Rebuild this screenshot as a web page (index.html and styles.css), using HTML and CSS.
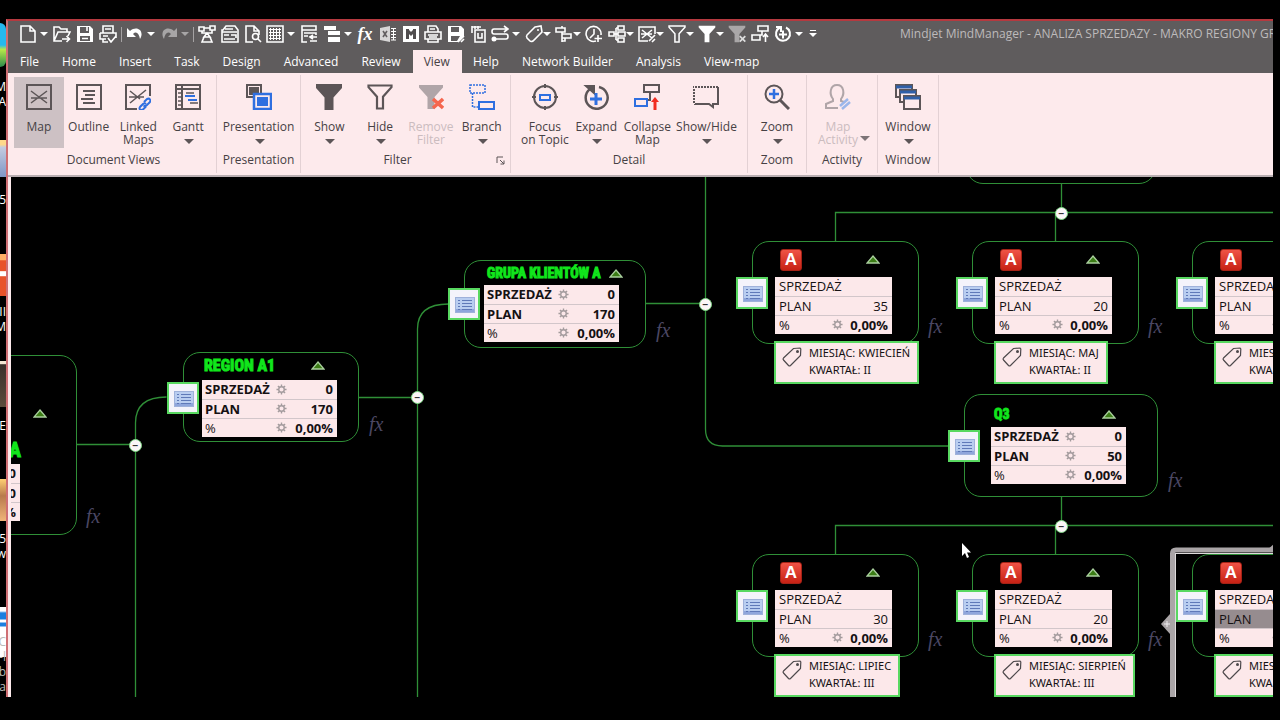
FILE: index.html
```html
<!DOCTYPE html>
<html lang="en">
<head>
<meta charset="utf-8">
<title>Mindjet MindManager</title>
<link rel="stylesheet" href="styles.css">
</head>
<body>
<svg class="defs" aria-hidden="true">
  <symbol id="list" viewBox="0 0 20 16"><rect x=".5" y=".5" width="19" height="15" fill="#b9cdf0" stroke="#9fb1da"/><path d="M1 12h18v3H1z" fill="#8fa6dc"/><path d="M3 3.500h2M3 6.500h2M3 9.500h2M3 12.500h2M7 3.500h10M7 6.500h10M7 9.500h10M7 12.500h10" stroke="#5f79b8"/></symbol>
  <symbol id="tri" viewBox="0 0 14 9"><path d="M7 1 13 8H1z" fill="#3c7d16" stroke="#a9cf9d" stroke-width="1.300"/></symbol>
  <symbol id="gear" viewBox="0 0 12 12"><circle cx="6" cy="6" r="3" fill="none" stroke="#a39b9d" stroke-width="1.500"/><path d="M6 .5V3M6 9v2.500M.5 6H3M9 6h2.500M2.100 2.100l1.800 1.800M8.100 8.100l1.800 1.800M9.900 2.100 8.100 3.900M3.900 8.100 2.100 9.900" stroke="#a39b9d" stroke-width="1.500"/></symbol>
  <symbol id="tag" viewBox="0 0 20 20"><path d="M11.500 1.500 18 1l.8 1-.3 6.500L8.500 18.500q-1 .8-2 0L1.500 13q-.8-1 0-2z" fill="none" stroke="#4d484b" stroke-width="1.200"/><circle cx="15.500" cy="4.500" r="1.500" fill="#4d484b"/></symbol>
  <symbol id="funnel" viewBox="0 0 26 26"><path d="M1 1h24v2.500L16.500 13v12h-7V13L1 3.500z"/></symbol>
  <symbol id="hollow" viewBox="0 0 26 26"><path d="M1.500 1.500h23v1.700L16 12.700v11.800h-6V12.700L1.500 3.200z" fill="none" stroke-width="2.200"/></symbol>
</svg>

<aside class="desktop" aria-hidden="true">
  <i class="pic p1"></i><span class="cap c1">M<br>A</span>
  <i class="pic p2"></i><span class="cap c2">5</span>
  <i class="pic p3"></i><span class="cap c3">II<br>M</span>
  <i class="pic p4"></i><span class="cap c4">E</span>
  <i class="pic p5"></i><span class="cap c5">5<br>w</span>
  <i class="pic p6"></i><span class="cap c6">C<br>-l<br>b<br>na</span>
</aside>

<main class="app">
  <header class="titlebar">
    <div class="qat">
      <div class="qgroup">
        <button class="q drop" aria-label="New"><svg viewBox="0 0 18 18"><path d="M2 1h9l5 5v11H2zM11 1v5h5"/></svg></button>
        <button class="q" aria-label="Open"><svg viewBox="0 0 18 18"><path d="M9 16H1V2h5l2 2h6v3M1 16 5 7h12l-2 4M9 14h7M13.500 11l3 3-3 3"/></svg></button>
        <button class="q" aria-label="Save"><svg viewBox="0 0 18 18"><path class="f" d="M1 1h13l3 3v13H1zM4 2v6h9V2zm0 9v5h10v-5z" fill-rule="evenodd"/><path d="M11 2v4M6 13.500h6"/></svg></button>
        <button class="q" aria-label="Print"><svg viewBox="0 0 18 18"><path d="M4 8V1h10v7M1 8h16v5M1 8v6h6M6 4h6M4 11h5M4 14v3h5M9 13l3 4 5-6"/></svg></button>
      </div>
      <span class="qsep"></span>
      <div class="qgroup">
        <button class="q drop" aria-label="Undo"><svg viewBox="0 0 18 18"><path class="f" d="M1 3v9h9L7 9c3-3 6-1 7 5 5-8-3-14-10-8z"/></svg></button>
        <button class="q drop dim" aria-label="Redo"><svg viewBox="0 0 18 18"><path class="f" d="M17 3v9H8l3-3C8 6 5 8 4 14-1 6 7 0 14 6z"/></svg></button>
      </div>
      <span class="qsep"></span>
      <div class="qgroup">
        <button class="q" aria-label="Topics"><svg viewBox="0 0 18 18"><path d="M1 2h5v4H1zM12 1h5v4h-5zM6 3h6M4 6v2h10V5M9 8l-3 4h6zM6 12l-2 5h10l-2-5"/></svg></button>
        <button class="q" aria-label="Notes"><svg viewBox="0 0 18 18"><path d="M2 5 5 1h9l3 4v12H1V5zM4 4h8M1 7h15M3 10h5M3 14h11M10 10h5v3"/></svg></button>
        <button class="q" aria-label="Preview"><svg viewBox="0 0 18 18"><path d="M9 17H2V1h8l5 5v4M10 1v5h5"/><circle cx="11.500" cy="11.500" r="3"/><path d="m14 14 3 3"/></svg></button>
      </div>
      <div class="qgroup">
        <button class="q drop" aria-label="Table"><svg viewBox="0 0 18 18"><path d="M1 1h16v16H1z"/><path class="thin" d="M3 4.500h12M3 7.500h12M3 10.500h12M3 13.500h12M4.500 3v12M7.500 3v12M10.500 3v12M13.500 3v12"/></svg></button>
        <button class="q" aria-label="Layout"><svg viewBox="0 0 18 18"><path d="M2 1h14v4H2zM2 5v12h5M4 8h12v2M4 11h4M9 12h8M10 16h7M13 10l-3 2 3 2"/></svg></button>
        <button class="q drop" aria-label="Rows"><svg viewBox="0 0 18 18"><path class="f" d="M1 1h12v4H1zM5 6h12v4H5zM5 12h12v5H5z"/></svg></button>
      </div>
      <div class="qgroup">
        <button class="q formula" aria-label="Formula">fx</button>
        <button class="q" aria-label="Excel"><svg viewBox="0 0 18 18"><path class="f soft" d="M1 3 11 1v16L1 15z"/><path class="thin" d="M12 3.500h5M12 6.500h5M12 9.500h5M12 12.500h5M12 15h5M14.500 3v12"/><path d="m4 6 4 6M8 6l-4 6" stroke="#625f60"/></svg></button>
        <button class="q" aria-label="MindManager"><svg viewBox="0 0 18 18"><path class="f" d="M1 1h16v16H1z"/><path d="M5.500 4v10M12.500 4v10M5 5l4 4 4-4" stroke="#504d4e" stroke-width="3"/></svg></button>
      </div>
      <div class="qgroup">
        <button class="q" aria-label="Print map"><svg viewBox="0 0 18 18"><path d="M4 7V1h8l2 3v3M1 7h16v7H1zM4 10h10M4 14v3h10v-3M6 4h5M5 12h8"/></svg></button>
        <button class="q" aria-label="Save as"><svg viewBox="0 0 18 18"><path class="f" d="M1 1h13l3 3v7l-6 6H1zM4 2v5h8V2zm0 9v5h6l3-5z" fill-rule="evenodd"/><path d="m11 17 6-6M14 17l3-3"/></svg></button>
        <button class="q" aria-label="Export"><svg viewBox="0 0 18 18"><path d="M5 5h10v12H5zM2 1v7M5 1v3M8 1v3M2 2h9M8 8v5h4V8"/></svg></button>
      </div>
      <div class="qgroup tight">
        <button class="q drop" aria-label="Relationship"><svg viewBox="0 0 18 18"><path d="M17 4H3q-2 0-2 2.500T3 9h12q2 0 2 2.500T15 14H3M13 1l4 3-4 3"/><circle class="f" cx="3" cy="14" r="2.500"/></svg></button>
        <button class="q drop small" aria-label="Tag"><svg viewBox="0 0 18 18"><path d="m10 2 6-1 1 6L8 16q-2 1-3 0l-3-3q-1-2 0-3z"/><circle class="f" cx="13" cy="5" r="1"/></svg></button>
        <button class="q drop small" aria-label="Align"><svg viewBox="0 0 18 18"><path d="M1 3h9v4H1zM7 9h9v4H7zM7 1v2M7 7v10M7 16h3v-3"/></svg></button>
        <button class="q" aria-label="Timer"><svg viewBox="0 0 18 18"><path d="M11 16A7.500 7.500 0 1 1 16 10M9 4v5l-4 4M13 10v7M9.500 13.500h7.500"/></svg></button>
        <button class="q drop small" aria-label="Tree"><svg viewBox="0 0 18 18"><path d="M1 7h5v4H1zM10 1h6v4h-6zM10 7h7v4h-7zM10 13h6v4h-6zM6 9h4M8 3v12M8 3h2M8 15h2"/></svg></button>
        <button class="q drop small" aria-label="Map view"><svg viewBox="0 0 18 18"><path d="M10 16H1V2h16v7M4 5l10 8M14 5 4 13M3 9h11M11 16l6-6M14 17l3-3"/></svg></button>
        <button class="q drop small" aria-label="Hide filter"><svg viewBox="0 0 26 26"><use href="#hollow"/></svg></button>
        <button class="q drop small" aria-label="Show filter"><svg viewBox="0 0 26 26" class="solid"><use href="#funnel"/></svg></button>
        <button class="q" aria-label="Remove filter"><svg viewBox="0 0 26 26" class="solid grey"><use href="#funnel"/><path d="m17 16 8 8M25 16l-8 8" stroke="#ddd" stroke-width="2.500"/></svg></button>
        <button class="q" aria-label="Collapse"><svg viewBox="0 0 18 18"><path d="M7 1h10v5H7zM1 10h8v5H1zM11 6v4H9M14.500 17V9M12 12l2.500-3 2.500 3"/></svg></button>
        <button class="q drop" aria-label="Expand"><svg viewBox="0 0 18 18"><path d="M6 2.500a7 7 0 1 0 6 0M2 2h5v5M9 5.500v8M5 9.500h8" stroke-width="2"/></svg></button>
      </div>
      <button class="q more" aria-label="Customize"><svg viewBox="0 0 8 10"><path class="f" d="M1 1h6v1H1zM0 4h8L4 8z"/></svg></button>
    </div>
    <p class="apptitle">Mindjet MindManager - ANALIZA SPRZEDAŻY - MAKRO REGIONY GR</p>
  </header>

  <nav class="tabs">
    <button>File</button><button>Home</button><button>Insert</button><button>Task</button><button>Design</button><button>Advanced</button><button>Review</button><button class="on">View</button><button>Help</button><button>Network Builder</button><button>Analysis</button><button>View-map</button>
  </nav>

  <section class="ribbon">
    <div class="group g-views">
      <div class="cmds">
        <button class="cmd on"><svg viewBox="0 0 26 26"><path d="M1 1h24v24H1z"/><path class="t" d="m5 7 16 12M21 7 5 19M5 14h16"/></svg><span>Map</span></button>
        <button class="cmd"><svg viewBox="0 0 26 26"><path d="M1 1h24v24H1z"/><path d="M7 7h12M9 11h10M5 15h12M7 19h12"/></svg><span>Outline</span></button>
        <button class="cmd"><svg viewBox="0 0 26 26"><path d="M12 25H1V1h24v11"/><path class="t" d="m5 7 10 8M21 6 5 19M4 13h15"/><path class="b" d="m19 18 3-3q2-1 3 .5t-.5 3l-3 3q-2 1-3 0M21 20q-1.500-1.500-3 0l-3 3q-1 1.500 0 2.500t3 0l3-3"/></svg><span>Linked<br>Maps</span></button>
        <button class="cmd drop"><svg viewBox="0 0 26 26"><path d="M1 1h24v24H1zM7 1v24M1 5h24"/><path class="t" d="M3 9h4M3 13h4M3 17h4M3 21h4M11 9h8M15 19h8"/><path class="b" d="M10 12h10M13 16h9"/></svg><span>Gantt</span></button>
      </div>
      <h2>Document Views</h2>
    </div>
    <div class="group g-pres">
      <div class="cmds"><button class="cmd drop"><svg viewBox="0 0 26 26"><path d="M1 1h14v12H1z"/><path d="M4 4h8v6H4z" fill="#5c5557"/><path class="b" d="M8 10h17v15H8z" fill="#fdeaec" stroke-width="2.500"/><path d="M11 13h11v9H11z" fill="#2f6fe0" stroke="none"/></svg><span>Presentation</span></button></div>
      <h2>Presentation</h2>
    </div>
    <div class="group g-filter">
      <div class="cmds">
        <button class="cmd drop"><svg viewBox="0 0 26 26" class="dark"><use href="#funnel"/></svg><span>Show</span></button>
        <button class="cmd drop"><svg viewBox="0 0 26 26"><use href="#hollow"/></svg><span>Hide</span></button>
        <button class="cmd off" disabled><svg viewBox="0 0 26 26"><g fill="#b0a5a8" stroke="none"><use href="#funnel"/></g><path d="m15 15 10 9M25 15l-10 9" stroke="#f5664e" stroke-width="3.500"/></svg><span>Remove<br>Filter</span></button>
        <button class="cmd drop"><svg viewBox="0 0 26 26"><path class="b dash" d="M1 1h15v8H1zM3.500 9v14H9"/><path class="b" d="M10 18h15v7H10z"/></svg><span>Branch</span></button>
      </div>
      <h2>Filter</h2>
      <button class="launcher" aria-label="Filter settings"><svg viewBox="0 0 9 9"><path d="M1 7V1h6M4 4l4 4M8 4.500V8H4.500"/></svg></button>
    </div>
    <div class="group g-detail">
      <div class="cmds">
        <button class="cmd"><svg viewBox="0 0 26 26"><circle cx="13" cy="13" r="11"/><path d="M13 0v4M13 22v4M0 13h4M22 13h4"/><path class="b" d="M8 11h10v5H8z"/></svg><span>Focus<br>on Topic</span></button>
        <button class="cmd drop"><svg viewBox="0 0 26 26"><path d="M7 5a11 11 0 1 0 9-2" stroke-width="2.500"/><path d="M3 2h8v7z" fill="#5c5557"/><path class="b" d="M13 9v12M7 15h12" stroke-width="3"/></svg><span>Expand</span></button>
        <button class="cmd"><svg viewBox="0 0 26 26"><path d="M10 1h15v7H10zM16 8v8h-2"/><path class="b" d="M1 15h12v7H1z"/><path d="M21 26v-9" stroke="#f12c20" stroke-width="3"/><path d="m17 18 4-5 4 5z" fill="#f12c20" stroke="none"/></svg><span>Collapse<br>Map</span></button>
        <button class="cmd drop"><svg viewBox="0 0 26 26"><path d="M1 20V3h24"/><path d="M25 3v17h-5v3l-4-3H1" /><path d="M1 3h24M1 20V3" stroke="#fdeaec" stroke-dasharray="1 2"/></svg><span>Show/Hide</span></button>
      </div>
      <h2>Detail</h2>
    </div>
    <div class="group g-zoom">
      <div class="cmds"><button class="cmd drop"><svg viewBox="0 0 26 26"><circle cx="10" cy="10" r="8.500"/><path d="m16 16 9 9" stroke-width="3"/><path class="b" d="M10 5v10M5 10h10" stroke-width="2.500"/></svg><span>Zoom</span></button></div>
      <h2>Zoom</h2>
    </div>
    <div class="group g-act">
      <div class="cmds"><button class="cmd off inline" disabled><svg viewBox="0 0 26 26"><path d="M13 24H1v-4l7-3v-2C4 10 5 1 12 1s8 9 4 14v2l3 1" stroke="#b0a5a8"/><path d="m15 22 8-7M17 25l8-7" stroke="#9bb6ea" stroke-width="2.500"/></svg><span>Map<br>Activity</span></button></div>
      <h2>Activity</h2>
    </div>
    <div class="group g-win">
      <div class="cmds"><button class="cmd drop"><svg viewBox="0 0 26 26"><path d="M1 1h16v12H1z" fill="#fdeaec"/><path d="M1 3h16" stroke="#2f5fa8" stroke-width="3"/><path d="M5 6h16v12H5z" fill="#fdeaec"/><path d="M5 8h16" stroke="#2f5fa8" stroke-width="3"/><path d="M9 12h16v13H9z" fill="#fdeaec"/><path d="M9 14h16" stroke="#2f5fa8" stroke-width="3"/></svg><span>Window</span></button></div>
      <h2>Window</h2>
    </div>
  </section>

  <section class="canvas">
    <svg class="links" aria-hidden="true">
      <path d="M66 267.500h59M124.500 520V246q0-26 31-26M348 220.500h59M406.500 520V152q0-25 31-25M635 126.500h59M694.500 0v252q0 17 17 17h226"/>
      <path d="M1050.500 7v29M824.500 64V35.500H1280M1044.500 36v28M1050.500 320v29M824.500 377v-28.500H1280M1044.500 349v28"/>
    </svg>
    <div class="collapse k1">−</div><div class="collapse k2">−</div><div class="collapse k3">−</div><div class="collapse k4">−</div><div class="collapse k5">−</div>

    <svg class="frame" viewBox="0 0 114 150" aria-hidden="true"><path d="M12.500 150V6.500q0-3.500 3.500-3.500H114" fill="none" stroke="#aaa5a7" stroke-width="5"/><path d="M15 6.500h99M15.500 7v143" fill="none" stroke="#dedadb"/><path d="M1 77 10 67v20z" fill="#aaa5a7"/><path d="m107 3 7-6v6z" fill="#aaa5a7"/><path d="M4 77h6M7 74v6" stroke="#f0eef0"/></svg>

    <article class="node root">
      <svg class="tri"><use href="#tri"/></svg>
      <h3>A</h3>
      <table><tr><th></th><td>0</td></tr><tr><th></th><td>0</td></tr><tr class="pct"><th></th><td>%</td></tr></table>
      <span class="fx">fx</span>
    </article>

    <article class="node sum region">
      <header><h3>REGION A1</h3><svg class="tri"><use href="#tri"/></svg></header>
      <table><tr><th>SPRZEDAŻ</th><td class="g"><svg><use href="#gear"/></svg></td><td>0</td></tr><tr><th>PLAN</th><td><svg><use href="#gear"/></svg></td><td>170</td></tr><tr class="pct"><th>%</th><td><svg><use href="#gear"/></svg></td><td>0,00%</td></tr></table>
      <span class="note"><svg><use href="#list"/></svg></span><span class="fx">fx</span>
    </article>

    <article class="node sum client">
      <header><h3>GRUPA KLIENTÓW A</h3><svg class="tri"><use href="#tri"/></svg></header>
      <table><tr><th>SPRZEDAŻ</th><td class="g"><svg><use href="#gear"/></svg></td><td>0</td></tr><tr><th>PLAN</th><td><svg><use href="#gear"/></svg></td><td>170</td></tr><tr class="pct"><th>%</th><td><svg><use href="#gear"/></svg></td><td>0,00%</td></tr></table>
      <span class="note"><svg><use href="#list"/></svg></span><span class="fx">fx</span>
    </article>

    <article class="node q2"></article>

    <article class="node sum q3">
      <header><h3>Q3</h3><svg class="tri"><use href="#tri"/></svg></header>
      <table><tr><th>SPRZEDAŻ</th><td class="g"><svg><use href="#gear"/></svg></td><td>0</td></tr><tr><th>PLAN</th><td><svg><use href="#gear"/></svg></td><td>50</td></tr><tr class="pct"><th>%</th><td><svg><use href="#gear"/></svg></td><td>0,00%</td></tr></table>
      <span class="note"><svg><use href="#list"/></svg></span><span class="fx">fx</span>
    </article>

    <article class="node month col1 row1">
      <header><b class="badge">A</b><svg class="tri"><use href="#tri"/></svg></header>
      <table><tr><th>SPRZEDAŻ</th><td class="g"></td><td></td></tr><tr><th>PLAN</th><td></td><td>35</td></tr><tr class="pct"><th>%</th><td><svg><use href="#gear"/></svg></td><td>0,00%</td></tr></table>
      <span class="note"><svg><use href="#list"/></svg></span><span class="fx">fx</span>
      <div class="tag"><svg><use href="#tag"/></svg><p>MIESIĄC: KWIECIEŃ<br>KWARTAŁ: II</p></div>
    </article>
    <article class="node month col2 row1">
      <header><b class="badge">A</b><svg class="tri"><use href="#tri"/></svg></header>
      <table><tr><th>SPRZEDAŻ</th><td class="g"></td><td></td></tr><tr><th>PLAN</th><td></td><td>20</td></tr><tr class="pct"><th>%</th><td><svg><use href="#gear"/></svg></td><td>0,00%</td></tr></table>
      <span class="note"><svg><use href="#list"/></svg></span><span class="fx">fx</span>
      <div class="tag"><svg><use href="#tag"/></svg><p>MIESIĄC: MAJ<br>KWARTAŁ: II</p></div>
    </article>
    <article class="node month col3 row1">
      <header><b class="badge">A</b><svg class="tri"><use href="#tri"/></svg></header>
      <table><tr><th>SPRZEDAŻ</th><td class="g"></td><td></td></tr><tr><th>PLAN</th><td></td><td></td></tr><tr class="pct"><th>%</th><td><svg><use href="#gear"/></svg></td><td>0,00%</td></tr></table>
      <span class="note"><svg><use href="#list"/></svg></span>
      <div class="tag"><svg><use href="#tag"/></svg><p>MIESIĄC:<br>KWARTAŁ:</p></div>
    </article>
    <article class="node month col1 row2">
      <header><b class="badge">A</b><svg class="tri"><use href="#tri"/></svg></header>
      <table><tr><th>SPRZEDAŻ</th><td class="g"></td><td></td></tr><tr><th>PLAN</th><td></td><td>30</td></tr><tr class="pct"><th>%</th><td><svg><use href="#gear"/></svg></td><td>0,00%</td></tr></table>
      <span class="note"><svg><use href="#list"/></svg></span><span class="fx">fx</span>
      <div class="tag"><svg><use href="#tag"/></svg><p>MIESIĄC: LIPIEC<br>KWARTAŁ: III</p></div>
    </article>
    <article class="node month col2 row2">
      <header><b class="badge">A</b><svg class="tri"><use href="#tri"/></svg></header>
      <table><tr><th>SPRZEDAŻ</th><td class="g"></td><td></td></tr><tr><th>PLAN</th><td></td><td>20</td></tr><tr class="pct"><th>%</th><td><svg><use href="#gear"/></svg></td><td>0,00%</td></tr></table>
      <span class="note"><svg><use href="#list"/></svg></span><span class="fx">fx</span>
      <div class="tag"><svg><use href="#tag"/></svg><p>MIESIĄC: SIERPIEŃ<br>KWARTAŁ: III</p></div>
    </article>
    <article class="node month col3 row2">
      <header><b class="badge">A</b><svg class="tri"><use href="#tri"/></svg></header>
      <table><tr><th>SPRZEDAŻ</th><td class="g"></td><td></td></tr><tr class="picked"><th>PLAN</th><td></td><td></td></tr><tr class="pct"><th>%</th><td><svg><use href="#gear"/></svg></td><td>0,00%</td></tr></table>
      <span class="note"><svg><use href="#list"/></svg></span>
      <div class="tag"><svg><use href="#tag"/></svg><p>MIESIĄC:<br>KWARTAŁ:</p></div>
    </article>

    <svg class="pointer" viewBox="0 0 10 17" aria-hidden="true"><path d="M1 1v13l3-3 2 5 2-1-2-4.500h4z" fill="#fff"/></svg>
  </section>
</main>
</body>
</html>
```
FILE: styles.css
```css
* { box-sizing: border-box; }
body {
  margin: 0;
  height: 100vh;
  padding: 19px 7px 23px 0;
  display: flex;
  overflow: hidden;
  background: #000;
  color: #464144;
  font: 12px/14px "Open Sans", "Noto Sans", sans-serif;
}
h2, h3, p { margin: 0; font-size: inherit; font-weight: normal; }
button { border: 0; padding: 0; background: none; font: inherit; color: inherit; }
svg { display: block; }
.defs { position: absolute; width: 0; height: 0; }

/* desktop behind the window */
.desktop { position: relative; flex: none; width: 6px; overflow: hidden; color: #fff; }
.pic, .cap { position: absolute; right: 0; }
.pic { width: 6px; }
.cap { line-height: 15px; text-align: right; }
.p1 { top: 4px; height: 44px; background: linear-gradient(#26b9ee 50%, #b5e84a 60%, #2d8a4b); border-radius: 0 6px 6px 0; }
.p2 { top: 121px; height: 37px; background: linear-gradient(#ffd98a 12%, #c3cbe0 20%, #7f97c6); }
.p3 { top: 235px; height: 42px; background: linear-gradient(#ffb066 14%, #e8532a 16% 40%, #fff 42% 52%, #e8532a 54%); }
.p4 { top: 342px; height: 46px; background: linear-gradient(#f3e6d2 6%, #3a312b 8%, #5b4c3c); }
.p5 { top: 460px; height: 42px; background: linear-gradient(#ffcf73, #b87a4c 40%, #f0b579); }
.p6 { top: 588px; height: 50px; background: linear-gradient(#fff 8%, #1b7fe0 12% 24%, #fff 26% 30%, #1b7fe0 32% 38%, #fff 40%); }
.c1 { top: 60px; } .c2 { top: 173px; } .c3 { top: 285px; } .c4 { top: 399px; } .c5 { top: 512px; } .c6 { top: 615px; }
.c6 { color: #bbb; }

.app {
  flex: 1;
  min-width: 0;
  display: flex;
  flex-direction: column;
  border-top: 2px solid #b5393f;
  border-left: 2px solid #cf6f74;
  background: #fdeaec;
}

/* title bar */
.titlebar { display: flex; align-items: center; height: 29px; padding: 0 0 3px 11px; background: #5f5c5d; color: #fff; }
.qat, .qgroup { display: flex; align-items: center; flex: none; }
.qat { gap: 4px; }
.qgroup { gap: 5px; }
.tight { margin-left: -1px; }
.qsep { width: 1px; height: 15px; background: #a5a2a3; }
.q { position: relative; flex: none; width: 18px; height: 18px; }
.q svg { width: 18px; height: 18px; fill: none; stroke: #fff; stroke-width: 1.6; }
.q .f, .q .solid { fill: #fff; stroke: none; }
.q .soft { opacity: .75; }
.q .thin { stroke-width: 1; }
.q .grey { fill: #aaa7a8; }
.q.drop { width: 29px; }
.q.small { width: 25px; }
.q.drop::after { content: ""; position: absolute; right: 0; top: 7px; border: 4px solid transparent; border-top-color: #fff; border-bottom: 0; }
.q.small::after { right: -1px; }
.q.dim { opacity: .45; }
.q.more { width: 8px; height: 10px; margin-left: 2px; }
.q.more svg { width: 8px; height: 10px; }
.formula { font: italic bold 18px/16px "Liberation Serif", serif; }
.apptitle { flex: 1; min-width: 0; margin-left: 83px; overflow: hidden; white-space: nowrap; color: #bdbabb; }

.tabs { display: flex; height: 23px; padding-left: 1px; background: #5f5c5d; color: #fff; }
.tabs button { padding: 0 12px 0 11px; white-space: nowrap; }
.tabs .on { background: #fdeaec; color: #464144; }

/* ribbon */
.ribbon { display: flex; height: 104px; padding: 2px 0 2px 3px; border-bottom: 2px solid #b9aeb1; background: #fdeaec; }
.group { position: relative; display: flex; flex-direction: column; flex: none; padding: 2px 3px 0; border-right: 1px solid #e3d1d4; }
.group h2 { margin-top: 5px; text-align: center; }
.cmds { display: flex; justify-content: center; height: 71px; }
.cmd { position: relative; display: flex; flex-direction: column; align-items: center; justify-content: flex-start; flex: 1 0 49px; padding-top: 7px; line-height: 13px; white-space: nowrap; text-align: center; }
.cmd svg { flex: none; width: 26px; height: 26px; margin-bottom: 10px; fill: none; stroke: #5c5557; stroke-width: 2; }
.cmd svg.dark { fill: #5c5557; }
.cmd .t { stroke-width: 1.5; }
.cmd .b { stroke: #2f6fe0; }
.cmd .dash { stroke-width: 1.5; stroke-dasharray: 2 1; }
.cmd.on { background: #cdc1c4; }
.cmd.off { color: #cbbcbf; }
.cmd.drop::after { content: ""; position: absolute; left: calc(50% - 4px); top: 62px; border: 5px solid transparent; border-top-color: #5c5557; border-bottom: 0; }
.cmd.inline { padding-right: 8px; }
.cmd.inline::after { content: ""; position: absolute; right: 4px; top: 59px; border: 5px solid transparent; border-top-color: #7d7477; border-bottom: 0; }
.launcher { position: absolute; right: 5px; bottom: 8px; width: 9px; height: 9px; }
.launcher svg { width: 9px; height: 9px; fill: none; stroke: #5c5557; }
.g-views { width: 206px; }
.g-pres { width: 84px; }
.g-filter { width: 210px; }
.g-filter h2 { padding-right: 16px; }
.g-detail { width: 237px; }
.g-detail .cmds { gap: 1px; }
.g-detail .cmd { flex: none; min-width: 49px; padding-right: 2px; padding-left: 2px; }
.g-zoom { width: 59px; }
.g-act { width: 71px; }
.g-win { width: 61px; }

/* map */
.canvas { position: relative; flex: 1; min-height: 0; margin-left: 3px; overflow: hidden; background: #000; color: #151113; }
.links { position: absolute; inset: 0; width: 100%; height: 100%; fill: none; stroke: #2f8f37; stroke-width: 1.3; }
.collapse { position: absolute; width: 13px; height: 13px; border: 1px solid #7fd486; border-radius: 50%; background: #fbf5f7; color: #333; font: bold 10px/11px "Liberation Sans", sans-serif; text-align: center; }
.k1 { left: 118px; top: 262px; } .k2 { left: 400px; top: 214px; } .k3 { left: 688px; top: 121px; } .k4 { left: 1044px; top: 30px; } .k5 { left: 1044px; top: 343px; }
.node { position: absolute; border: 1px solid #2f8f37; border-radius: 17px; }
.node header { display: flex; align-items: center; justify-content: space-between; }
.node h3 { color: #11e61c; font: bold 14px/18px Impact, "Roboto Condensed", "Open Sans Condensed", Roboto, sans-serif; white-space: nowrap; -webkit-text-stroke: 1px #11e61c; }
.tri { width: 14px; height: 9px; }
.node table { width: 135px; table-layout: fixed; border-collapse: collapse; background: #fce8ea; font-size: 13px; line-height: 18px; white-space: nowrap; }
.node tr + tr { border-top: 1px solid #d2c6ca; }
.node th, .node td { height: 19px; padding: 0; }
.node th { padding-left: 3px; text-align: left; font-weight: 700; }
.node td:last-child { padding-right: 4px; text-align: right; font-weight: 700; }
.node td svg { width: 11px; height: 11px; margin: 0 auto; }
.node .g { width: 12px; }
.sum th:first-child { width: 73px; }
.node .pct th { font-weight: 400; }
.note { position: absolute; left: -17px; width: 32px; height: 32px; padding: 7px 5px; border: 2px solid #58d860; background: #f4f3fb; }
.note svg { width: 20px; height: 16px; }
.fx { position: absolute; color: #4b4763; font: italic 20px/20px "Liberation Serif", serif; }

.root { left: -160px; top: 178px; width: 226px; height: 180px; padding-left: 99px; }
.root .tri { margin: 53px 0 22px 82px; }
.root h3 { width: 70px; font-size: 20px; line-height: 20px; text-align: right; }
.root table { width: 69px; margin-top: 4px; }
.root .fx { left: 234px; top: 150px; }

.region { left: 172px; top: 175px; width: 176px; height: 90px; padding-left: 18px; }
.region header { height: 27px; padding: 0 33px 2px 2px; }
.region h3 { font-size: 16px; }
.region .note { top: 29px; }
.region .fx { left: 185px; top: 61px; }
.client { left: 453px; top: 83px; width: 182px; height: 88px; padding-left: 19px; }
.client header { height: 24px; padding: 0 22px 0 3px; }
.client .note { top: 27px; }
.client .fx { left: 191px; top: 59px; }
.q2 { left: 955px; top: -95px; width: 190px; height: 102px; }
.q3 { left: 953px; top: 217px; width: 194px; height: 103px; padding-left: 26px; }
.q3 header { height: 32px; padding: 6px 41px 0 3px; }
.q3 .note { top: 35px; }
.q3 .fx { left: 203px; top: 75px; }

.month { width: 167px; height: 103px; padding-left: 22px; }
.col1 { left: 741px; } .col2 { left: 961px; } .col3 { left: 1181px; }
.row1 { top: 64px; } .row2 { top: 377px; }
.month header { height: 35px; padding: 0 38px 0 5px; }
.month table { width: 117px; }
.month th, .month td:last-child { font-weight: 400; }
.month th { width: 56px; padding-left: 4px; }
.month .pct td:last-child { font-weight: 700; }
.badge { width: 22px; height: 22px; border: 1px solid #a52216; border-radius: 3px; background: linear-gradient(#ef5345, #c72114); color: #fff; font: bold 17px/20px "Liberation Sans", sans-serif; text-align: center; }
.month .note { top: 35px; }
.month .fx { left: 175px; top: 74px; }
.tag { position: absolute; left: 21px; top: 99px; display: flex; gap: 7px; height: 43px; padding: 1px 7px 0 6px; border: 2px solid #58d860; background: #fce8ea; white-space: nowrap; font: 11px/17px "Noto Sans", "Open Sans", sans-serif; }
.tag svg { width: 20px; height: 20px; margin-top: 3px; }
.picked { background: #968c8f; }
.frame { position: absolute; left: 1149px; top: 370px; width: 114px; height: 150px; overflow: visible; }
.pointer { position: absolute; left: 950px; top: 365px; width: 10px; height: 17px; }
```
